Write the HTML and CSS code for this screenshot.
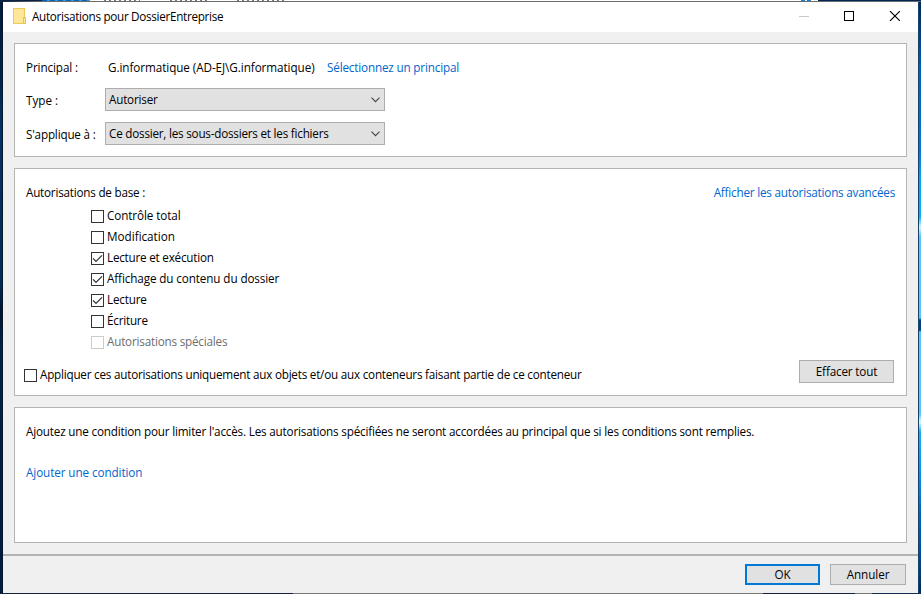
FILE: index.html
```html
<!DOCTYPE html>
<html lang="fr">
<head>
<meta charset="utf-8">
<title>Autorisations pour DossierEntreprise</title>
<link rel="stylesheet" href="styles.css">
</head>
<body>
<div class="desktop">
  <div class="strip-top"><i class="tab"></i><i class="words"></i><i class="dots"></i><i class="corner"></i></div>
  <div class="strip-left"></div>
  <main class="window">
    <header class="titlebar">
      <svg class="folder" width="13" height="16" viewBox="0 0 13 16">
        <rect x=".5" y=".5" width="11" height="15" fill="#ffe698" stroke="#edc956"/>
        <rect x="10.5" y="9.5" width="2" height="6" fill="#ffe698" stroke="#e8c24c"/>
      </svg>
      <h1 class="title">Autorisations pour DossierEntreprise</h1>
      <svg class="controls" width="101" height="10" viewBox="0 0 101 10" fill="none" shape-rendering="crispEdges">
        <path d="M0 5.5H10" stroke="#c8c8c8"/>
        <rect x="45.5" y=".5" width="9" height="9" stroke="#000"/>
        <path d="M91 0L101 10M101 0L91 10" stroke="#000" stroke-width="1.1" shape-rendering="auto"/>
      </svg>
    </header>

    <section class="panel subject">
      <div class="field">
        <span class="label principal">Principal :</span>
        <span class="account">G.informatique (AD-EJ\G.informatique)</span>
        <a class="link pick">Sélectionnez un principal</a>
      </div>
      <div class="field combo-row">
        <span class="label type">Type :</span>
        <div class="combo"><span class="k20">Autoriser</span><svg width="9" height="6" viewBox="0 0 9 6"><path d="M.5 .7L4.5 4.7L8.5 .7" fill="none" stroke="#444" stroke-width="1.1"/></svg></div>
      </div>
      <div class="field combo-row">
        <span class="label applies">S'applique à :</span>
        <div class="combo"><span class="k22">Ce dossier, les sous-dossiers et les fichiers</span><svg width="9" height="6" viewBox="0 0 9 6"><path d="M.5 .7L4.5 4.7L8.5 .7" fill="none" stroke="#444" stroke-width="1.1"/></svg></div>
      </div>
    </section>

    <section class="panel rights">
      <div class="heading"><span class="k22">Autorisations de base :</span><a class="link k20">Afficher les autorisations avancées</a></div>
      <ul class="checks">
        <li><i class="box"></i><span class="k09">Contrôle total</span></li>
        <li><i class="box"></i><span class="k00">Modification</span></li>
        <li><i class="box"><svg width="11" height="11" viewBox="0 0 11 11"><path d="M1 5.4L4 8.4L10 2.4" fill="none" stroke="#333" stroke-width="1.3"/></svg></i><span class="k22">Lecture et exécution</span></li>
        <li><i class="box"><svg width="11" height="11" viewBox="0 0 11 11"><path d="M1 5.4L4 8.4L10 2.4" fill="none" stroke="#333" stroke-width="1.3"/></svg></i><span class="k11">Affichage du contenu du dossier</span></li>
        <li><i class="box"><svg width="11" height="11" viewBox="0 0 11 11"><path d="M1 5.4L4 8.4L10 2.4" fill="none" stroke="#333" stroke-width="1.3"/></svg></i><span class="k18">Lecture</span></li>
        <li><i class="box"></i><span class="k22">Écriture</span></li>
        <li class="off"><i class="box"></i><span class="k20">Autorisations spéciales</span></li>
      </ul>
      <div class="scope">
        <i class="box"></i><span class="k22">Appliquer ces autorisations uniquement aux objets et/ou aux conteneurs faisant partie de ce conteneur</span>
        <button class="button clear">Effacer tout</button>
      </div>
    </section>

    <section class="panel conditions">
      <p class="k18">Ajoutez une condition pour limiter l'accès. Les autorisations spécifiées ne seront accordées au principal que si les conditions sont remplies.</p>
      <a class="link k09">Ajouter une condition</a>
    </section>

    <footer class="footer">
      <button class="button ok">OK</button>
      <button class="button cancel">Annuler</button>
    </footer>
  </main>
  <div class="strip-right"></div>
  <div class="strip-bottom"></div>
</div>
</body>
</html>
```
FILE: styles.css
```css
* { box-sizing: border-box; }

body {
  margin: 0;
  font: 11.7px/16px "Open Sans", "Noto Sans", sans-serif;
  color: #000;
  overflow: hidden;
}

.desktop {
  display: grid;
  grid-template: 2px 591px 1px / 3px 915px 3px;
  width: 921px;
  height: 594px;
}

.strip-top {
  grid-column: 1 / 4;
  display: flex;
  height: 2px;
  background: #fff;
  border-bottom: 1px solid #6c6c6c;
  border-left: 42px solid #0b2343;
}
.strip-top i { height: 1px; }
.tab { width: 48px; background: repeating-linear-gradient(90deg, #0063b8 0 5px, #4e93cf 5px 8px); }
.words {
  width: 711px;
  background:
    repeating-linear-gradient(90deg, #777 0 2px, transparent 2px 5px) 14px 0 / 36px 1px no-repeat,
    repeating-linear-gradient(90deg, #777 0 2px, transparent 2px 5px) 80px 0 / 38px 1px no-repeat,
    repeating-linear-gradient(90deg, #777 0 2px, transparent 2px 5px) 147px 0 / 49px 1px no-repeat;
}
.dots { width: 11px; background: repeating-linear-gradient(90deg, #1683d8 0 4px, #fff 4px 6px); }
.corner { margin-left: 6px; flex: 1; background: #002655; }

.strip-left {
  border-right: 1px solid #0a1626;
  background: linear-gradient(#001d3f 0, #002450 80px, #003468 125px, #002b5e 280px, #001630 310px, #00234d 350px, #001c3e 100%);
}

.strip-right {
  border-left: 1px solid #17436b;
  background: linear-gradient(#002a5c 0, #003d80 30px, #0062c0 70px, #0078dc 150px, #00a4f4 175px, #00b4ff 215px, #dff6ff 225px, #58c4ff 235px, #58c4ff 316px, #003f83 318px, #003f83 328px, #58c4ff 330px, #58c4ff 412px, #e4f8ff 420px, #10b0ff 430px, #0090ee 475px, #0066c8 510px, #004a98 555px, #002a5c 100%);
}

.strip-bottom {
  grid-column: 1 / 4;
  background: linear-gradient(90deg, #14243c 293px, #777 293px 763px, #14243c 763px 855px, #777 855px 872px, #14304e 872px);
}

.window {
  display: flex;
  flex-direction: column;
  background: #f0f0f0;
}

.titlebar {
  display: flex;
  height: 30px;
  padding: 6px 18px 0 10px;
  background: #fff;
}
.title {
  flex: 1;
  margin: 0 0 0 6px;
  font: inherit;
  letter-spacing: -.29px;
}
.controls { margin-top: 3px; }

.panel {
  width: 893px;
  margin: 11px 0 0 11px;
  border: 1px solid #b4b4b4;
  background: #fff;
  white-space: nowrap;
}

.subject { height: 114px; padding-top: 15px; }
.field { display: flex; height: 29px; padding-left: 11px; }
.combo-row { height: 34px; }
.label { width: 79px; }
.combo-row .label { padding-top: 4px; }
.principal { width: 82px; letter-spacing: -.1px; }
.applies { letter-spacing: -.18px; }
.account { width: 219px; letter-spacing: -.065px; }
.pick { letter-spacing: -.165px; }

.combo {
  display: flex;
  justify-content: space-between;
  width: 280px;
  height: 23px;
  padding: 2px 4px 0 3px;
  border: 1px solid #adadad;
  background: #e1e1e1;
}
.combo svg { margin-top: 6px; }

.link { color: #0066cc; }

.rights { height: 228px; padding-top: 15px; }
.heading {
  display: flex;
  justify-content: space-between;
  padding: 0 11px;
}
.checks { margin: 7px 0 0 76px; padding: 0; list-style: none; }
.checks li { display: flex; height: 21px; gap: 3px; }
.box {
  flex: none;
  width: 13px;
  height: 13px;
  margin-top: 3px;
  border: 1px solid #333;
  background: #fff;
}
.box svg { display: block; }
.off { color: #6d6d6d; }
.off .box { border-color: #ccc; }

.scope { display: flex; gap: 3px; padding: 12px 12px 0 9px; }

.button {
  padding: 0;
  border: 1px solid #adadad;
  background: #e1e1e1;
  color: #000;
  font: inherit;
}
.clear {
  width: 95px;
  height: 23px;
  margin: -6px 0 0 auto;
  padding-bottom: 2px;
  letter-spacing: -.16px;
}

.conditions { height: 136px; padding: 15px 11px 0; }
.conditions p { margin: 0 0 25px; }

.footer {
  display: flex;
  gap: 10px;
  height: 39px;
  margin-top: 11px;
  padding: 8px 12px 0 742px;
  border-top: 2px solid #b4b4b4;
}
.footer .button { height: 21px; line-height: 17px; }
.ok { width: 75px; border: 2px solid #0078d7; }
.cancel { width: 76px; letter-spacing: -.07px; }

/* letter spacing steps */
.k00 { letter-spacing: 0; }
.k09 { letter-spacing: -.09px; }
.k11 { letter-spacing: -.11px; }
.k18 { letter-spacing: -.183px; }
.k20 { letter-spacing: -.2px; }
.k22 { letter-spacing: -.22px; }
```
